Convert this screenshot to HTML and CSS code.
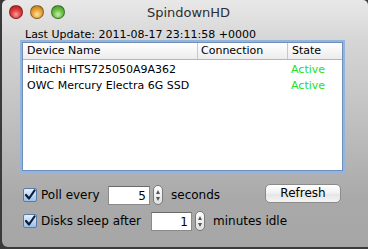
FILE: index.html
```html
<!DOCTYPE html>
<html lang="en">
<head>
    <meta charset="UTF-8">
    <title>SpindownHD</title>
    <link rel="stylesheet" href="styles.css">
</head>
<body>
<div class="window">
    <div class="titlebar">
        <div class="lights">
            <span class="light red"></span>
            <span class="light yellow"></span>
            <span class="light green"></span>
        </div>
        <div class="title">SpindownHD</div>
        <div></div>
    </div>
    <div class="content">
        <div class="last-update">Last Update: 2011-08-17 23:11:58 +0000</div>
        <div class="table">
            <div class="row head">
                <div class="cell name">Device Name</div>
                <div class="cell conn">Connection</div>
                <div class="cell state">State</div>
            </div>
            <div class="row">
                <div class="cell name">Hitachi HTS725050A9A362</div>
                <div class="cell conn"></div>
                <div class="cell state active">Active</div>
            </div>
            <div class="row">
                <div class="cell name">OWC Mercury Electra 6G SSD</div>
                <div class="cell conn"></div>
                <div class="cell state active">Active</div>
            </div>
        </div>
        <div class="controls">
            <div class="line">
                <label class="check"><span class="box">
                    <svg width="12" height="12" viewBox="0 0 12 12"><path d="M2 6 L5 9.5 L10.5 1.5" fill="none" stroke="#0d1a3c" stroke-width="2.2" stroke-linecap="round" stroke-linejoin="round"/></svg>
                </span>Poll every</label>
                <span class="field poll">5</span>
                <span class="stepper"><i class="up"></i><i class="down"></i></span>
                <span class="unit">seconds</span>
                <button class="button">Refresh</button>
            </div>
            <div class="line">
                <label class="check"><span class="box">
                    <svg width="12" height="12" viewBox="0 0 12 12"><path d="M2 6 L5 9.5 L10.5 1.5" fill="none" stroke="#0d1a3c" stroke-width="2.2" stroke-linecap="round" stroke-linejoin="round"/></svg>
                </span>Disks sleep after</label>
                <span class="field sleep">1</span>
                <span class="stepper"><i class="up"></i><i class="down"></i></span>
                <span class="unit">minutes idle</span>
            </div>
        </div>
    </div>
</div>
</body>
</html>
```

FILE: styles.css
```css
* {
    margin: 0;
    padding: 0;
    box-sizing: border-box;
}
body {
    width: 368px;
    height: 249px;
    overflow: hidden;
    background: #3a3a3a;
    font-family: "DejaVu Sans", "Liberation Sans", sans-serif;
    font-size: 11px;
    color: #000;
}
.window {
    width: 366px;
    height: 247px;
    margin-left: 2px;
    border-radius: 5px 5px 0 6px;
    background: linear-gradient(#e8e8e8 0px, #d6d6d6 40px, #c0c0c0 120px, #a9a9a9 200px, #a6a6a6 247px);
}
.titlebar {
    display: grid;
    grid-template-columns: 1fr auto 1fr;
    align-items: center;
    height: 24px;
    padding: 0 0 0 7px;
}
.lights {
    display: flex;
    gap: 7px;
}
.light {
    width: 14px;
    height: 14px;
    border-radius: 50%;
    border: 1px solid rgba(0, 0, 0, 0.35);
}
.red {
    background: radial-gradient(circle at 50% 70%, #f7a0a0 0, #e03c3c 45%, #a81818 100%);
}
.yellow {
    background: radial-gradient(circle at 50% 70%, #fde2a0 0, #e8a33a 45%, #b06e10 100%);
}
.green {
    background: radial-gradient(circle at 50% 70%, #c9f0a8 0, #6cc04a 45%, #3c8a22 100%);
}
.title {
    font-size: 13px;
    color: #2e2e2e;
}
.content {
    padding: 3px 25px 0 20px;
}
.last-update {
    padding-left: 3px;
    height: 15px;
    line-height: 15px;
}
.table {
    height: 129px;
    background: #fff;
    border: 1px solid #6f8fb8;
    box-shadow: 0 0 0 2px #93b4de;
}
.row {
    display: grid;
    grid-template-columns: 174px 90px 1fr;
    height: 16px;
    line-height: 16px;
}
.row.head {
    height: 17px;
    line-height: 16px;
    background: linear-gradient(#ffffff, #ececec);
    border-bottom: 1px solid #b5b5b5;
    margin-bottom: 2px;
}
.cell {
    padding-left: 4px;
    white-space: nowrap;
}
.head .conn, .head .state {
    border-left: 1px solid #c8c8c8;
    padding-left: 3px;
}
.row .state {
    padding-left: 4px;
}
.active {
    color: #22e022;
}
.controls {
    padding: 11px 0 0 1px;
}
.line {
    display: flex;
    align-items: center;
    height: 26px;
}
.check {
    display: flex;
    align-items: center;
    gap: 4px;
    font-size: 12px;
    width: 85px;
}
.box {
    width: 14px;
    height: 14px;
    border: 1px solid #5a7aa8;
    border-radius: 2px;
    background: linear-gradient(#e6f0fb, #9cc0ea);
    display: flex;
    align-items: center;
    justify-content: center;
}
.line:nth-child(2) .check {
    width: 128px;
}
.field {
    background: #fff;
    border: 1px solid #8a8a8a;
    border-top-color: #6a6a6a;
    height: 19px;
    line-height: 18px;
    text-align: right;
    padding-right: 3px;
    font-size: 12px;
}
.field.poll {
    width: 42px;
}
.field.sleep {
    width: 41px;
}
.stepper {
    width: 10px;
    height: 20px;
    margin-left: 3px;
    border: 1px solid #7a7a7a;
    border-radius: 5px;
    background: linear-gradient(#ffffff, #e0e0e0);
    display: flex;
    flex-direction: column;
    align-items: center;
    justify-content: space-around;
    padding: 2px 0;
}
.stepper i {
    width: 0;
    height: 0;
    border-left: 2.5px solid transparent;
    border-right: 2.5px solid transparent;
}
.stepper .up {
    border-bottom: 4px solid #555;
}
.stepper .down {
    border-top: 4px solid #555;
}
.unit {
    margin-left: 8px;
    font-size: 12px;
}
.button {
    margin-left: auto;
    margin-right: 2px;
    width: 76px;
    height: 19px;
    margin-top: -4px;
    font-family: inherit;
    font-size: 12px;
    border: 1px solid #8a8a8a;
    border-radius: 5px;
    background: linear-gradient(#ffffff, #f0f0f0 50%, #e4e4e4 51%, #f4f4f4);
    color: #000;
}
```
